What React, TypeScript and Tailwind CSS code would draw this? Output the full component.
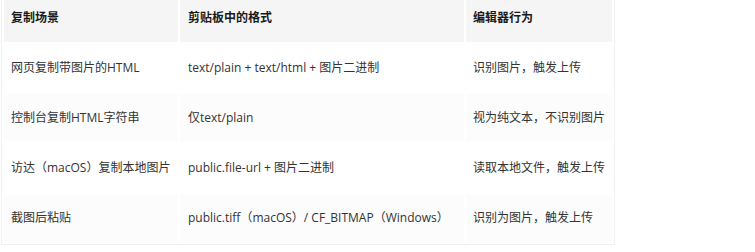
const rows = [
  ["网页复制带图片的HTML", "text/plain + text/html + 图片二进制", "识别图片，触发上传"],
  ["控制台复制HTML字符串", "仅text/plain", "视为纯文本，不识别图片"],
  ["访达（macOS）复制本地图片", "public.file-url + 图片二进制", "读取本地文件，触发上传"],
  ["截图后粘贴", "public.tiff（macOS）/ CF_BITMAP（Windows）", "识别为图片，触发上传"],
];

export default function App() {
  return (
    <div className="w-[755px] h-[252px] overflow-hidden bg-white font-['Segoe_UI','Open_Sans','Noto_Sans_CJK_SC',sans-serif] text-[12px]">
      <table className="-mt-[9px] ml-px w-[614px] table-fixed border-separate border-spacing-[2px] border border-[#f0f0f0]">
        <thead>
          <tr>
            <th className="h-12 w-[174px] bg-[#f5f5f5] px-[7px] text-left font-bold text-[#1a1a1a]">复制场景</th>
            <th className="h-12 w-[284px] bg-[#f5f5f5] px-[8px] text-left font-bold text-[#1a1a1a]">剪贴板中的格式</th>
            <th className="h-12 w-[146px] bg-[#f5f5f5] px-[7px] text-left font-bold text-[#1a1a1a]">编辑器行为</th>
          </tr>
        </thead>
        <tbody>
          {rows.map((r, i) => (
            <tr key={i} className={i % 2 === 1 ? "bg-[#fcfcfc]" : "bg-white"}>
              <td className="h-12 px-[7px] text-[#333] whitespace-nowrap">{r[0]}</td>
              <td className="h-12 px-[8px] text-[#333] whitespace-nowrap">{r[1]}</td>
              <td className="h-12 px-[7px] text-[#333] whitespace-nowrap">{r[2]}</td>
            </tr>
          ))}
        </tbody>
      </table>
    </div>
  );
}
